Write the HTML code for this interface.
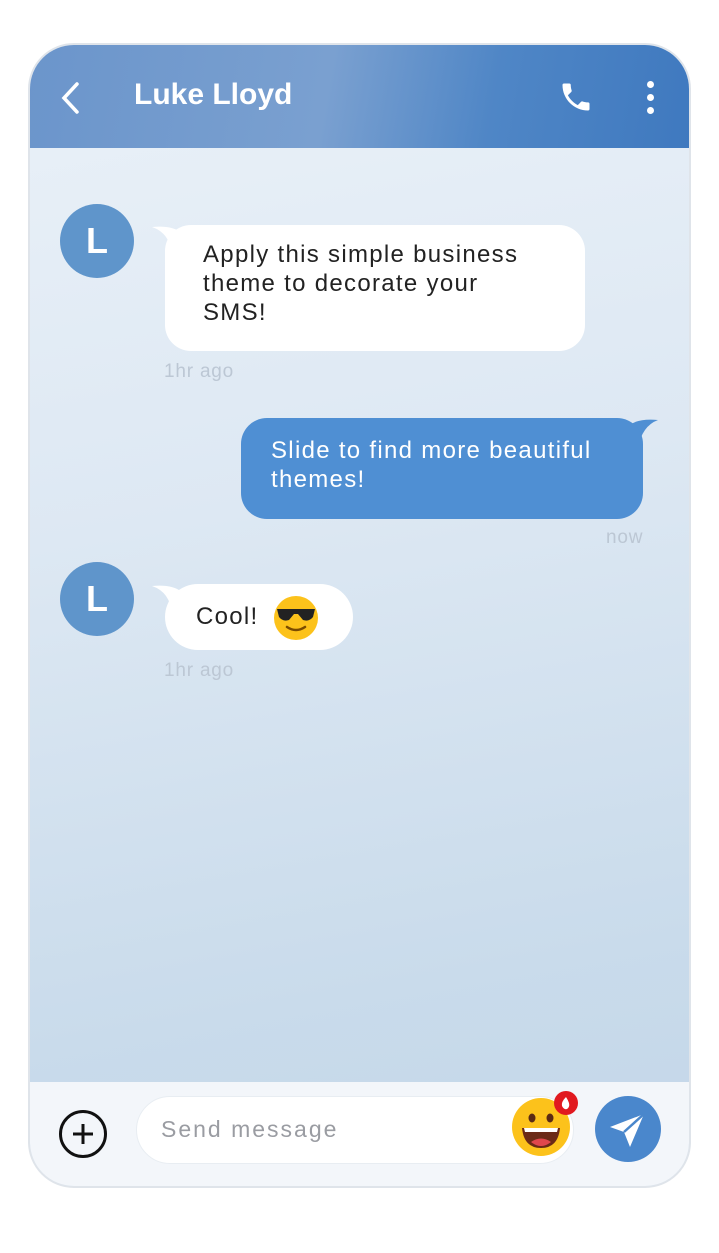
<!DOCTYPE html>
<html><head><meta charset="utf-8"><style>
*{margin:0;padding:0;box-sizing:border-box}
body{width:719px;height:1253px;background:#fff;font-family:"Liberation Sans",sans-serif;position:relative;overflow:hidden}
.frame{position:absolute;left:28px;top:43px;width:663px;height:1145px;border-radius:46px;overflow:hidden;border:2px solid #dfe4ea;background:linear-gradient(170deg,#eaf1f8 0%,#dde8f3 40%,#c9dbeb 80%,#c3d6e9 100%)}
.hdr{position:absolute;left:0;top:0;width:100%;height:103px;background:linear-gradient(100deg,#6b95cb 0%,#7aa0d0 45%,#4f86c6 70%,#3f79bf 100%)}
.hdr .t{position:absolute;left:104px;top:33px;color:#fff;font-size:30px;font-weight:bold}
.av{position:absolute;width:74px;height:74px;border-radius:50%;background:#5f95cb;color:#fff;font-weight:bold;font-size:36px;text-align:center;line-height:74px}
.b{position:absolute;background:#fff;border-radius:26px;font-size:24px;letter-spacing:1.3px;line-height:29px;color:#222;white-space:nowrap}
.tm{position:absolute;font-size:19px;letter-spacing:0.8px;color:#bcc7d4}
.bar{position:absolute;left:0;top:1037px;width:100%;height:110px;background:#f3f6fa}
</style></head><body>
<div class="frame">
 <div class="hdr">
  <svg style="position:absolute;left:28px;top:36px" width="26" height="34"><path d="M19 3 L6 17 L19 31" stroke="#fff" stroke-width="3.5" fill="none" stroke-linecap="round"/></svg>
  <div class="t">Luke Lloyd</div>
  <svg style="position:absolute;left:528px;top:34px" width="36" height="36" viewBox="0 0 24 24"><path fill="#fff" d="M6.6 10.8c1.4 2.8 3.8 5.1 6.6 6.6l2.2-2.2c.3-.3.7-.4 1-.2 1.1.4 2.3.6 3.6.6.6 0 1 .4 1 1V20c0 .6-.4 1-1 1C10.6 21 3 13.4 3 4c0-.6.4-1 1-1h3.5c.6 0 1 .4 1 1 0 1.3.2 2.5.6 3.6.1.3 0 .7-.2 1z"/></svg>
  <div style="position:absolute;left:617px;top:36px;width:7px;height:7px;border-radius:50%;background:#fff"></div>
  <div style="position:absolute;left:617px;top:49px;width:7px;height:7px;border-radius:50%;background:#fff"></div>
  <div style="position:absolute;left:617px;top:62px;width:7px;height:7px;border-radius:50%;background:#fff"></div>
 </div>
 <div class="av" style="left:30px;top:159px">L</div>
 <svg style="position:absolute;left:122px;top:180px" width="40" height="30"><path d="M0 2 Q20 0 30 8 L40 8 L40 30 L20 30 Q18 8 0 2Z" fill="#fff"/></svg>
 <div class="b" style="left:135px;top:180px;width:420px;height:126px;padding:15px 0 0 38px">Apply this simple business<br>theme to decorate your<br>SMS!</div>
 <div class="tm" style="left:134px;top:316px">1hr ago</div>
 <svg style="position:absolute;left:590px;top:373px" width="38" height="30"><path d="M38 2 Q18 0 8 8 L0 8 L0 30 L18 30 Q22 8 38 2Z" fill="#4f8fd3"/></svg>
 <div class="b" style="left:211px;top:373px;width:402px;height:101px;background:#4f8fd3;color:#fff;padding:18px 0 0 30px">Slide to find more beautiful<br>themes!</div>
 <div class="tm" style="left:576px;top:482px">now</div>
 <div class="av" style="left:30px;top:517px">L</div>
 <svg style="position:absolute;left:122px;top:539px" width="40" height="30"><path d="M0 2 Q20 0 30 8 L40 8 L40 30 L20 30 Q18 8 0 2Z" fill="#fff"/></svg>
 <div class="b" style="left:135px;top:539px;width:188px;height:66px;border-radius:33px;padding:18px 0 0 31px">Cool!</div>
 <svg style="position:absolute;left:243px;top:550px" width="46" height="46" viewBox="0 0 46 46"><circle cx="23" cy="23" r="22" fill="#fcc21b"/><path d="M4 14 H42 L40 22 Q36 27 30 25 L25 19 H21 L16 25 Q10 27 6 22Z" fill="#222"/><path d="M14 32 Q23 38 32 32" stroke="#7a4b00" stroke-width="2.5" fill="none" stroke-linecap="round"/></svg>
 <div class="tm" style="left:134px;top:615px">1hr ago</div>
 <div class="bar">
  <svg style="position:absolute;left:28px;top:27px" width="50" height="50"><circle cx="25" cy="25" r="22.5" fill="none" stroke="#111" stroke-width="3"/><path d="M25 15V35M15 25H35" stroke="#111" stroke-width="3"/></svg>
  <div style="position:absolute;left:106px;top:14px;width:438px;height:68px;border-radius:34px;background:#fff;border:1px solid #e8edf2"></div>
  <div style="position:absolute;left:131px;top:34px;font-size:23px;letter-spacing:2px;color:#9a9ca2">Send message</div>
  <svg style="position:absolute;left:480px;top:8px" width="70" height="66" viewBox="0 0 70 66"><circle cx="31" cy="37" r="29" fill="#fcc21b"/><ellipse cx="22" cy="28" rx="3.5" ry="4.5" fill="#5a2a14"/><ellipse cx="40" cy="28" rx="3.5" ry="4.5" fill="#5a2a14"/><path d="M12 38 H50 Q48 58 31 58 Q14 58 12 38Z" fill="#6b2a17"/><path d="M14 38 H48 L47 42 H15Z" fill="#fff"/><path d="M21 52 Q31 45 41 52 Q31 60 21 52Z" fill="#e0474c"/><circle cx="56" cy="13" r="12" fill="#e1191f"/><path d="M56 7 Q51 12 52 16 Q54 20 57 19 Q60 17 59 13 Q58 10 56 7Z" fill="#fff"/></svg>
  <svg style="position:absolute;left:564px;top:13px" width="68" height="68"><circle cx="34" cy="34" r="33" fill="#4a87cc"/><path d="M50 19 L16 32 L30 37 L36 52Z" fill="#fff"/><path d="M50 19 L30 37" stroke="#4a87cc" stroke-width="2.5"/></svg>
 </div>
</div>
</body></html>
